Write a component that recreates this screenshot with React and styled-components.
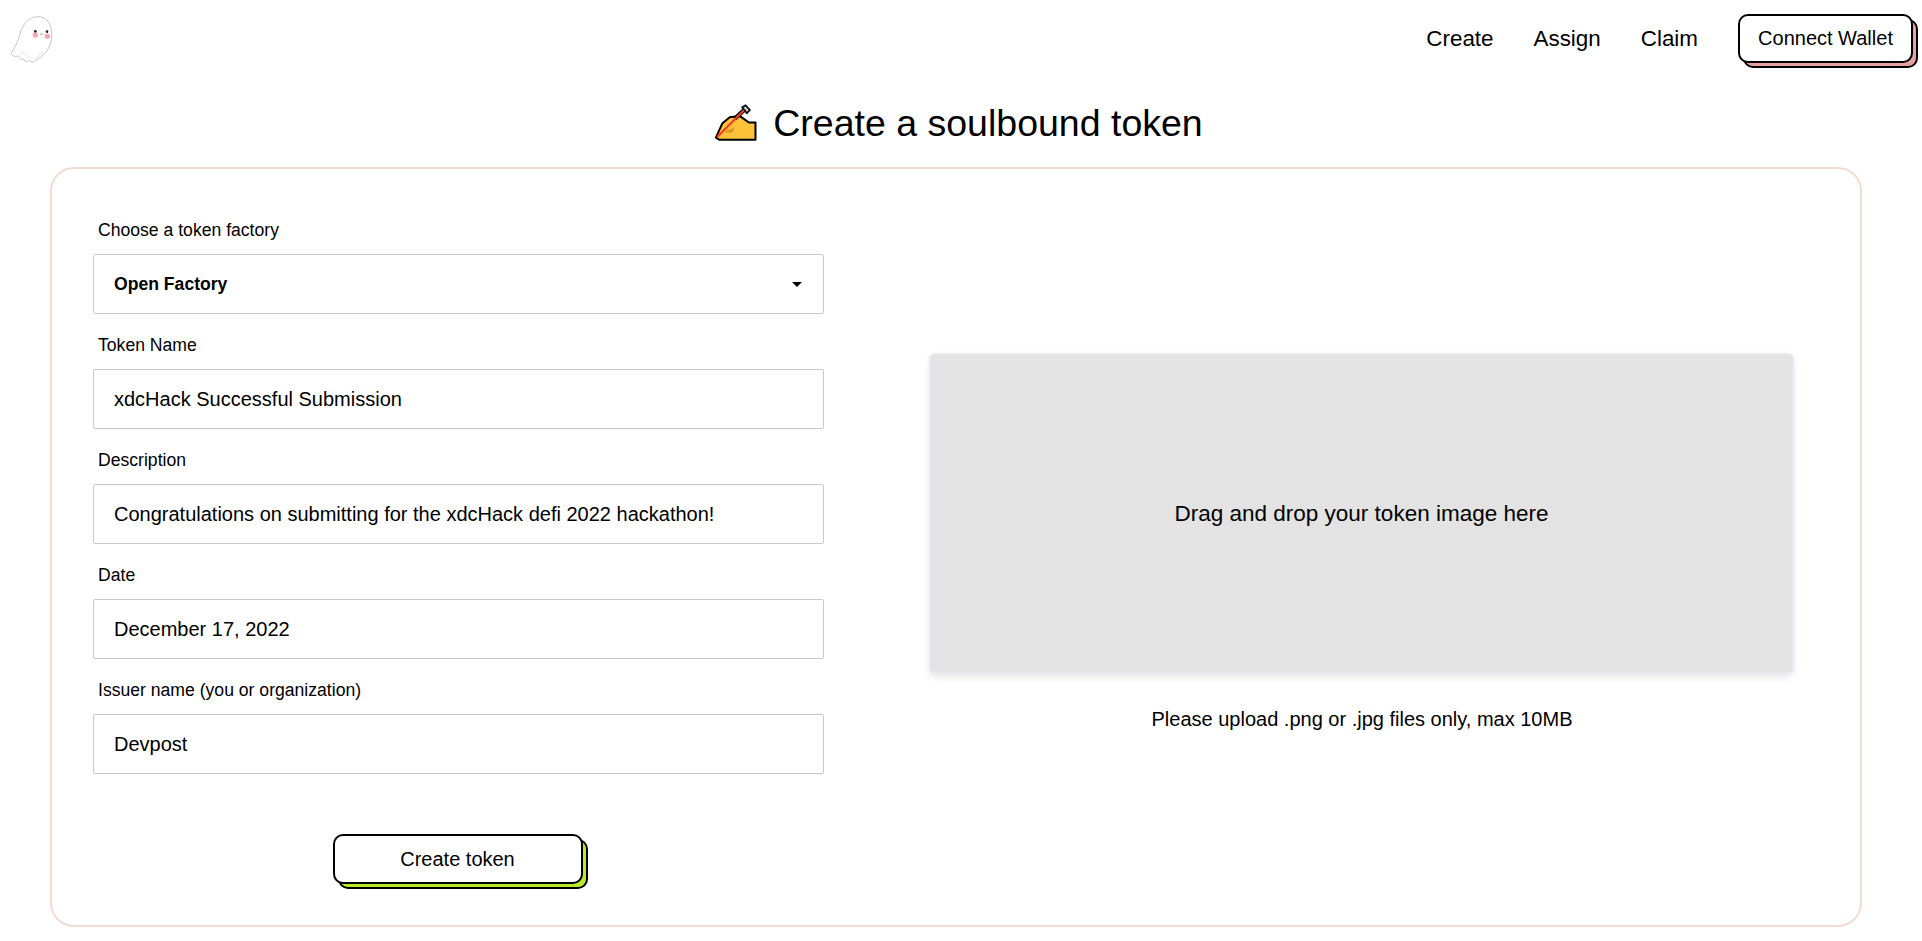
import React from 'react';
import styled, { createGlobalStyle } from 'styled-components';

const Global = createGlobalStyle`
  html, body { margin: 0; padding: 0; background: #fff; }
  body { font-family: "Liberation Sans", Arial, sans-serif; color: #000; }
  * { box-sizing: border-box; }
`;

const Page = styled.div`
  width: 1922px;
  height: 941px;
  overflow: hidden;
`;

const Nav = styled.nav`
  display: flex;
  justify-content: space-between;
  align-items: flex-start;
  height: 64px;
  padding: 14px 9px 0 8px;
`;

const Links = styled.div`
  display: flex;
  align-items: center;
  gap: 40px;
`;

const NavLink = styled.a`
  font-size: 22.4px;
  color: #000;
  text-decoration: none;
`;

const ShadowButton = styled.button`
  font-family: inherit;
  color: #000;
  background: #fff;
  border: 2.5px solid #000;
  border-radius: 10px;
  box-shadow: 5px 5px 0 -2px ${(p) => p.$shade}, 5px 5px 0 0 #000;
  cursor: pointer;
`;

const WalletButton = styled(ShadowButton)`
  width: 175px;
  height: 49px;
  font-size: 20px;
  padding: 0;
`;

const Title = styled.h1`
  display: flex;
  justify-content: center;
  align-items: center;
  gap: 14px;
  margin: 29px 0 14px;
  height: 60px;
  padding-right: 6px;
  font-size: 37.5px;
  font-weight: 400;
`;

const Card = styled.main`
  width: 1812px;
  margin: 0 0 0 50px;
  padding: 51px 0 41px 41px;
  border: 2px solid #f2dcd2;
  border-radius: 24px;
  display: grid;
  grid-template-columns: 731px 861px;
  column-gap: 107px;
`;

const FormCol = styled.form`
  display: flex;
  flex-direction: column;
  gap: 21px;
`;

const Field = styled.div`
  display: flex;
  flex-direction: column;
`;

const Label = styled.label`
  font-size: 17.6px;
  line-height: 20px;
  margin: 0 0 14px 5px;
`;

const Input = styled.input`
  width: 100%;
  height: 60px;
  padding: 0 20px;
  border: 1px solid #c9c9c9;
  border-radius: 2px;
  font-family: inherit;
  font-size: 20px;
  color: #000;
  background: #fff;
  outline: none;
`;

const Select = styled.div`
  display: flex;
  align-items: center;
  justify-content: space-between;
  height: 60px;
  padding: 0 21px 0 20px;
  border: 1px solid #c9c9c9;
  border-radius: 2px;
  font-size: 17.6px;
  font-weight: 700;
`;

const SubmitRow = styled.div`
  display: flex;
  justify-content: center;
  margin-top: 39px;
  padding-right: 2px;
`;

const SubmitButton = styled(ShadowButton)`
  width: 250px;
  height: 50px;
  font-size: 20px;
  padding: 0;
`;

const UploadCol = styled.div`
  display: flex;
  flex-direction: column;
  align-items: center;
  padding-top: 135px;
`;

const DropZone = styled.div`
  width: 861px;
  height: 317px;
  display: flex;
  align-items: center;
  justify-content: center;
  background: #e3e3e3;
  border-radius: 4px;
  box-shadow: 0 0 0 2px #e8e8f0, 0 4px 10px rgba(0, 0, 0, 0.13);
  font-size: 22.5px;
`;

const Hint = styled.p`
  margin: 35px 0 0 1px;
  font-size: 20px;
  line-height: 24px;
`;

const Ghost = () => (
  <svg width="47" height="50" viewBox="25 45 141 150" aria-hidden="true">
    <path
      d="M60 110C68 68 100 46 127 55C150 62 160 88 155 122C151 150 132 172 108 184C103 190 95 192 89 184C84 190 76 189 72 180C66 184 60 179 56 170C50 175 38 172 33 164C42 150 54 132 60 110Z"
      fill="#fff"
      stroke="#c4c4c4"
      strokeWidth="3"
    />
    <path d="M62 168C70 150 78 165 88 178M110 176C118 170 124 165 130 156" fill="none" stroke="#e2e2e2" strokeWidth="3" />
    <circle cx="107" cy="108" r="8" fill="#f0a9b2" />
    <circle cx="143" cy="112" r="8" fill="#f0a9b2" />
    <circle cx="107" cy="97" r="4" fill="#222" />
    <circle cx="142" cy="98" r="4" fill="#222" />
    <path d="M121 104Q126 110 131 104" fill="none" stroke="#777" strokeWidth="2" />
  </svg>
);

const WritingHand = () => (
  <svg width="46" height="38" viewBox="42 50 138 115" aria-hidden="true">
    <path d="M50 152L70 108L92 90L122 86L150 106H170V158H60Z" fill="#fdc13a" stroke="#000" strokeWidth="6" strokeLinejoin="round" />
    <path d="M76 134L108 120L100 136H80Z" fill="#d99a1f" />
    <path d="M108 94L136 68" stroke="#000" strokeWidth="13" />
    <path d="M130 60L140 54L153 68L144 78Z" fill="#c9c9c9" stroke="#000" strokeWidth="5" />
    <path d="M54 150L135 69" stroke="#f0412a" strokeWidth="7" />
  </svg>
);

const Caret = () => (
  <svg width="10" height="5" viewBox="0 0 10 5" aria-hidden="true">
    <path d="M0 0h10L5 5z" fill="#000" />
  </svg>
);

const fields = [
  { label: 'Token Name', value: 'xdcHack Successful Submission' },
  { label: 'Description', value: 'Congratulations on submitting for the xdcHack defi 2022 hackathon!' },
  { label: 'Date', value: 'December 17, 2022' },
  { label: 'Issuer name (you or organization)', value: 'Devpost' },
];

export default function App() {
  return (
    <Page>
      <Global />
      <Nav>
        <Ghost />
        <Links>
          <NavLink>Create</NavLink>
          <NavLink>Assign</NavLink>
          <NavLink>Claim</NavLink>
          <WalletButton type="button" $shade="#e8a0a0">Connect Wallet</WalletButton>
        </Links>
      </Nav>
      <Title>
        <WritingHand />
        Create a soulbound token
      </Title>
      <Card>
        <FormCol>
          <Field>
            <Label>Choose a token factory</Label>
            <Select>
              Open Factory
              <Caret />
            </Select>
          </Field>
          {fields.map((f) => (
            <Field key={f.label}>
              <Label>{f.label}</Label>
              <Input type="text" defaultValue={f.value} />
            </Field>
          ))}
          <SubmitRow>
            <SubmitButton type="button" $shade="#b8ec2a">Create token</SubmitButton>
          </SubmitRow>
        </FormCol>
        <UploadCol>
          <DropZone>Drag and drop your token image here</DropZone>
          <Hint>Please upload .png or .jpg files only, max 10MB</Hint>
        </UploadCol>
      </Card>
    </Page>
  );
}
